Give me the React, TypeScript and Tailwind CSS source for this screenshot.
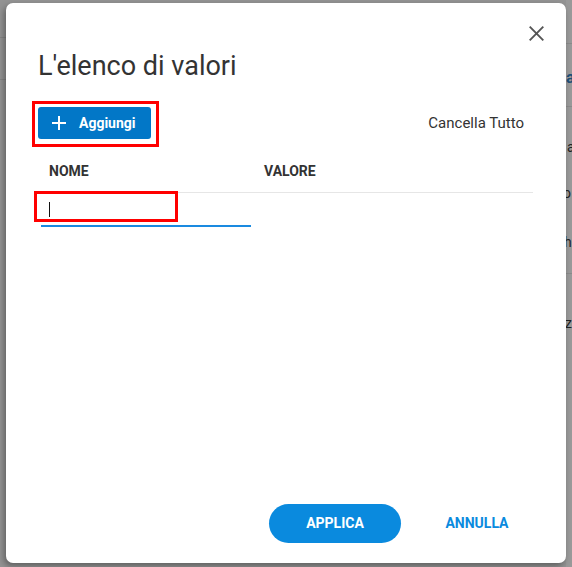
import React from "react";

export default function App() {
  return (
    <div
      className="relative w-[572px] h-[567px] overflow-hidden bg-[#939393]"
      style={{ fontFamily: "Roboto, 'Liberation Sans', sans-serif" }}
    >
      {/* dimmed background page */}
      <div className="absolute inset-0">
        <div className="absolute left-0 top-[37px] w-[10px] h-px bg-[#858585]" />
        <div className="absolute left-0 top-[79px] w-[10px] h-px bg-[#858585]" />
        <div className="absolute right-0 top-0 w-[6px] h-full bg-[#999999] flex flex-col text-[14px] text-[#222] leading-none">
          <div className="h-[44px] border-b border-[#8a8a8a]" />
          <div className="h-[63px] border-b border-[#8a8a8a] pt-[26px] text-[16px] font-bold text-[#1f4f78]">al</div>
          <div className="pt-[33px] pl-px">a</div>
          <div className="pt-[32px] -ml-[3px]">o</div>
          <div className="pt-[35px] -ml-[2px]">h</div>
          <div className="mt-[24px] border-t border-[#8a8a8a]" />
          <div className="pt-[42px] -ml-px">zi</div>
        </div>
      </div>

      {/* dialog */}
      <div className="absolute left-[6px] top-[3px] w-[560px] h-[560px] bg-white rounded-[7px] shadow-[-2px_3px_6px_rgba(0,0,0,0.35)] flex flex-col">
        <button className="absolute right-[18px] top-[18px] w-[24px] h-[24px] flex items-center justify-center">
          <svg width="15" height="15" viewBox="0 0 15 15" fill="none" stroke="#555" strokeWidth="1.9">
            <path d="M0.7 0.7 L14.3 14.3 M14.3 0.7 L0.7 14.3" />
          </svg>
        </button>

        <h1 className="pl-[32px] pt-[47px] text-[27px] leading-[32px] text-[#333] font-normal">
          L'elenco di valori
        </h1>

        <div className="mt-[25px] pl-[32px] pr-[42px] flex items-center justify-between">
          <button className="h-[32px] w-[113px] rounded-[3px] bg-[#0277c7] flex items-center text-white">
            <svg className="ml-[14px]" width="14" height="14" viewBox="0 0 14 14" stroke="white" strokeWidth="2">
              <path d="M7 0 V14 M0 7 H14" />
            </svg>
            <span className="ml-[13px] text-[14px] font-bold">Aggiungi</span>
          </button>
          <span className="text-[15px] text-[#333]">Cancella Tutto</span>
        </div>

        <div className="mt-[11px] ml-[35px] mr-[33px]">
          <div className="flex h-[43px] items-center border-b border-[#e6e6e6] text-[14px] font-bold text-[#333]">
            <div className="w-[215px] pl-[8px]">NOME</div>
            <div className="pl-[8px]">VALORE</div>
          </div>
          <div className="flex">
            <div className="w-[210px] h-[34px] border-b-2 border-[#1a8ae0] flex items-center pl-[8px]">
              <span className="w-px h-[15px] bg-[#111]" />
            </div>
          </div>
        </div>

        <div className="mt-auto mb-[20px] mr-[23px] flex justify-end gap-[10px]">
          <button className="w-[132px] h-[39px] rounded-full bg-[#0a8ade] text-white text-[14px] font-bold">
            APPLICA
          </button>
          <button className="w-[132px] h-[39px] rounded-full text-[#0a8ade] text-[14px] font-bold">
            ANNULLA
          </button>
        </div>
      </div>

      {/* red annotation boxes */}
      <div className="absolute left-[32px] top-[101px] w-[127px] h-[46px] border-[3px] border-[#ff0000]" />
      <div className="absolute left-[34px] top-[191px] w-[144px] h-[31px] border-[3px] border-[#ff0000]" />
    </div>
  );
}
